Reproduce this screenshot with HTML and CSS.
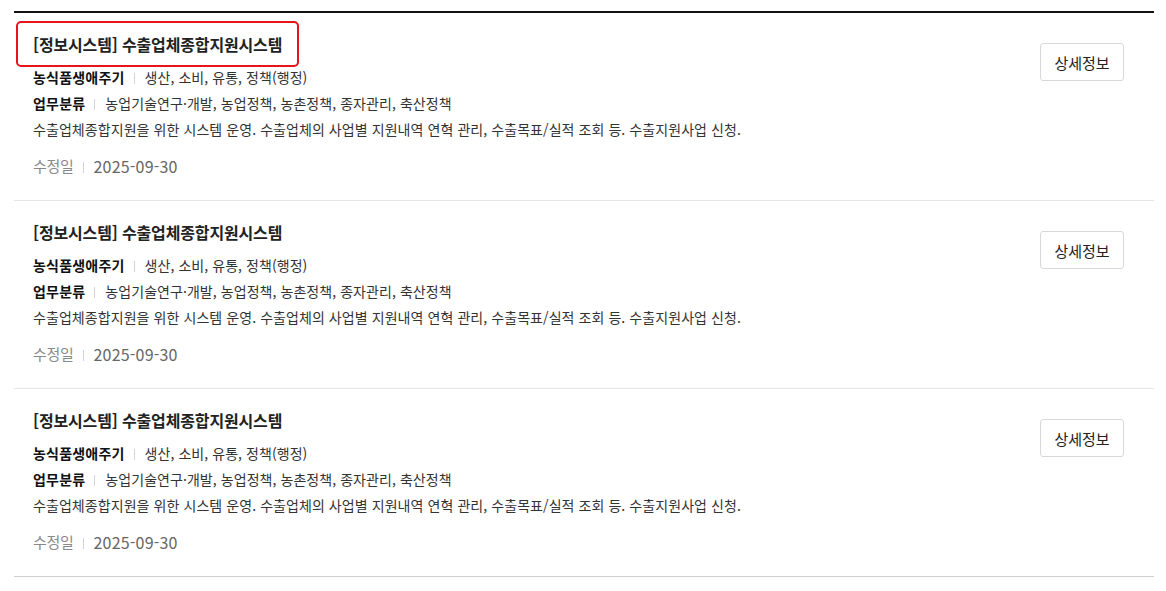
FILE: index.html
```html
<!DOCTYPE html>
<html lang="ko">
<head>
<meta charset="utf-8">
<title>정보시스템 목록</title>
<link rel="stylesheet" href="styles.css">
</head>
<body>
<ul class="list">
  <li class="item">
    <div class="body">
      <a class="title focused" href="#">[정보시스템] 수출업체종합지원시스템</a>
      <dl class="info">
        <div class="info-row"><dt>농식품생애주기</dt><dd>생산, 소비, 유통, 정책(행정)</dd></div>
        <div class="info-row"><dt>업무분류</dt><dd>농업기술연구·개발, 농업정책, 농촌정책, 종자관리, 축산정책</dd></div>
      </dl>
      <p class="desc">수출업체종합지원을 위한 시스템 운영. 수출업체의 사업별 지원내역 연혁 관리, 수출목표/실적 조회 등. 수출지원사업 신청.</p>
      <p class="date"><span class="date-label">수정일</span><span class="date-value">2025-09-30</span></p>
    </div>
    <a class="btn" href="#">상세정보</a>
  </li>
  <li class="item">
    <div class="body">
      <a class="title" href="#">[정보시스템] 수출업체종합지원시스템</a>
      <dl class="info">
        <div class="info-row"><dt>농식품생애주기</dt><dd>생산, 소비, 유통, 정책(행정)</dd></div>
        <div class="info-row"><dt>업무분류</dt><dd>농업기술연구·개발, 농업정책, 농촌정책, 종자관리, 축산정책</dd></div>
      </dl>
      <p class="desc">수출업체종합지원을 위한 시스템 운영. 수출업체의 사업별 지원내역 연혁 관리, 수출목표/실적 조회 등. 수출지원사업 신청.</p>
      <p class="date"><span class="date-label">수정일</span><span class="date-value">2025-09-30</span></p>
    </div>
    <a class="btn" href="#">상세정보</a>
  </li>
  <li class="item">
    <div class="body">
      <a class="title" href="#">[정보시스템] 수출업체종합지원시스템</a>
      <dl class="info">
        <div class="info-row"><dt>농식품생애주기</dt><dd>생산, 소비, 유통, 정책(행정)</dd></div>
        <div class="info-row"><dt>업무분류</dt><dd>농업기술연구·개발, 농업정책, 농촌정책, 종자관리, 축산정책</dd></div>
      </dl>
      <p class="desc">수출업체종합지원을 위한 시스템 운영. 수출업체의 사업별 지원내역 연혁 관리, 수출목표/실적 조회 등. 수출지원사업 신청.</p>
      <p class="date"><span class="date-label">수정일</span><span class="date-value">2025-09-30</span></p>
    </div>
    <a class="btn" href="#">상세정보</a>
  </li>
</ul>
</body>
</html>
```
FILE: styles.css
```css
* { box-sizing: border-box; }
html, body { margin: 0; padding: 0; background: #fff; }
body {
  font-family: "Noto Sans CJK KR", "Noto Sans", sans-serif;
  color: #333;
}
.list {
  list-style: none;
  margin: 11px 12px 0 14px;
  padding: 0;
  border-top: 2px solid #111;
}
.item {
  display: flex;
  align-items: flex-start;
  padding: 19px 30px 22px 19px;
  border-bottom: 1px solid #e6e6e8;
}
.item:last-child { border-bottom-color: #cfcfcf; }
.body { flex: 1; min-width: 0; }
.title {
  display: inline-block;
  font-size: 16px;
  line-height: 24px;
  font-weight: 700;
  color: #222;
  text-decoration: none;
  letter-spacing: -0.15px;
}
.title.focused {
  padding: 9px 15px;
  margin: -9px -15px;
  outline: 2px solid #e8141b;
  border-radius: 3px;
}
.info { margin: 8px 0 0; padding: 0; }
.info-row {
  display: flex;
  align-items: center;
  height: 26px;
  font-size: 14px;
  letter-spacing: 0;
}
.info-row dt {
  font-weight: 700;
  color: #111;
  letter-spacing: 0.2px;
}
.info-row dt::after {
  content: "";
  display: inline-block;
  width: 1px;
  height: 11px;
  background: #d4d4d4;
  margin: 0 10px 0 9px;
  vertical-align: -1px;
}
.info-row dd { margin: 0; color: #333; letter-spacing: 0.06px; }
.desc {
  margin: 0;
  font-size: 14px;
  line-height: 26px;
  color: #333;
  letter-spacing: 0.07px;
}
.date {
  margin: 12px 0 0;
  font-size: 15px;
  line-height: 24px;
  display: flex;
  align-items: center;
}
.date-label { color: #8a8a8a; letter-spacing: -0.3px; }
.date-label::after {
  content: "";
  display: inline-block;
  width: 1px;
  height: 11px;
  background: #d4d4d4;
  margin: 0 10px 0 9px;
  vertical-align: -1px;
}
.date-value { color: #666; font-size: 16px; letter-spacing: 0.2px; }
.btn {
  flex: none;
  margin-top: 11px;
  width: 84px;
  height: 38px;
  display: flex;
  align-items: center;
  justify-content: center;
  border: 1px solid #d8d8d8;
  border-radius: 3px;
  font-size: 15px;
  color: #222;
  text-decoration: none;
  letter-spacing: 0;
}
```
